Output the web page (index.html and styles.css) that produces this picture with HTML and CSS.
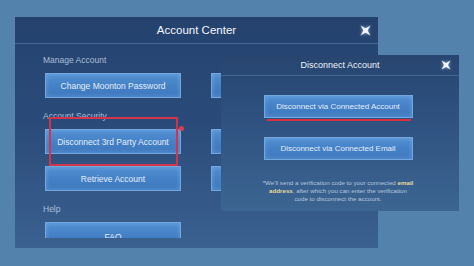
FILE: index.html
```html
<!DOCTYPE html>
<html>
<head>
<meta charset="utf-8">
<link rel="stylesheet" href="styles.css">
</head>
<body>
<div class="panel">
  <div class="panel-head">
    <span></span>
    <h1 class="title">Account Center</h1>
    <svg class="close" width="11" height="11" viewBox="0 0 10 10"><polygon points="0.5,0.5 6.2,3.8 9.5,9.5 3.8,6.2" fill="#f2f7ff"/><polygon points="9.5,0.5 6.2,6.2 0.5,9.5 3.8,3.8" fill="#f2f7ff"/></svg>
  </div>
  <div class="panel-body">
    <div class="label">Manage Account</div>
    <div class="btn-grid">
      <div class="btn">Change Moonton Password</div>
      <div class="btn"></div>
    </div>
    <div class="label gap">Account Security</div>
    <div class="btn-grid">
      <div class="btn">Disconnect 3rd Party Account</div>
      <div class="btn"></div>
      <div class="btn">Retrieve Account</div>
      <div class="btn"></div>
    </div>
    <div class="label gap">Help</div>
    <div class="btn-grid">
      <div class="btn faq">FAQ</div>
    </div>
  </div>
</div>

<div class="dialog">
  <div class="dialog-head">
    <span></span>
    <h2 class="dtitle">Disconnect Account</h2>
    <svg class="close dclose" width="10" height="10" viewBox="0 0 10 10"><polygon points="0.5,0.5 6.2,3.8 9.5,9.5 3.8,6.2" fill="#f2f7ff"/><polygon points="9.5,0.5 6.2,6.2 0.5,9.5 3.8,3.8" fill="#f2f7ff"/></svg>
  </div>
  <div class="dialog-body">
    <div class="dbtn">Disconnect via Connected Account</div>
    <div class="dbtn">Disconnect via Connected Email</div>
    <p class="note">*We'll send a verification code to your connected <b>email</b><br><b>address</b>, after which you can enter the verification<br>code to disconnect the account.</p>
  </div>
</div>

<div class="mark-box"></div>
<div class="mark-dot"></div>
<div class="mark-line"></div>
</body>
</html>
```

FILE: styles.css
```css
html, body {
  margin: 0;
  padding: 0;
}
body {
  width: 474px;
  height: 266px;
  overflow: hidden;
  position: relative;
  background: #5383ad;
  font-family: "Liberation Sans", Arial, sans-serif;
  color: #e4eefa;
}
.panel {
  margin: 17px 0 0 15px;
  width: 363px;
  height: 231px;
  background: linear-gradient(180deg, #25426e 0%, #2a4b7a 45%, #3a6190 100%);
  display: flex;
  flex-direction: column;
}
.panel-head {
  height: 26px;
  flex: none;
  border-bottom: 1px solid rgba(110, 150, 200, 0.45);
  display: grid;
  grid-template-columns: 1fr auto 1fr;
  align-items: center;
}
.title {
  margin: 0;
  font-size: 11.5px;
  font-weight: normal;
  color: #f2f6fc;
}
.close {
  justify-self: end;
  margin-right: 7px;
  filter: drop-shadow(0 0 1.5px rgba(200, 225, 255, 0.8));
}
.panel-body {
  height: 194px;
  overflow: hidden;
  padding: 11px 0 0 28px;
  box-sizing: border-box;
}
.label {
  font-size: 8.5px;
  line-height: 10px;
  color: #a9bdd6;
  margin-bottom: 8px;
}
.label.gap {
  margin-top: 13px;
}
.btn-grid {
  padding-left: 2px;
  display: grid;
  grid-template-columns: 136px 136px;
  column-gap: 30px;
  row-gap: 12px;
}
.btn {
  height: 25px;
  box-sizing: border-box;
  border: 1px solid #74a6de;
  background: linear-gradient(180deg, #5290d2 0%, #4581c6 50%, #3f79bf 100%);
  box-shadow: inset 0 0 5px rgba(160, 205, 255, 0.35);
  display: flex;
  align-items: center;
  justify-content: center;
  font-size: 8.5px;
  color: #e3eefb;
}
.faq {
  align-items: flex-end;
  padding-bottom: 4px;
}
.dialog {
  position: absolute;
  left: 221px;
  top: 55px;
  width: 238px;
  height: 156px;
  background: linear-gradient(180deg, #27456f 0%, #2e5180 40%, #3c6592 100%);
  display: flex;
  flex-direction: column;
}
.dialog-head {
  height: 20px;
  flex: none;
  border-bottom: 1px solid rgba(110, 150, 200, 0.35);
  display: grid;
  grid-template-columns: 1fr auto 1fr;
  align-items: center;
}
.dtitle {
  margin: 0;
  font-size: 9px;
  font-weight: normal;
  color: #eef3fa;
}
.dclose {
  margin-right: 8px;
}
.dialog-body {
  display: flex;
  flex-direction: column;
  align-items: center;
  padding: 19px 0 0 0;
  margin-left: -4px;
}
.dbtn {
  width: 149px;
  height: 23px;
  box-sizing: border-box;
  margin-bottom: 19px;
  border: 1px solid #74a6de;
  background: linear-gradient(180deg, #5290d2 0%, #4581c6 50%, #3f79bf 100%);
  box-shadow: inset 0 0 5px rgba(160, 205, 255, 0.35);
  display: flex;
  align-items: center;
  justify-content: center;
  font-size: 8px;
  color: #e3eefb;
}
.note {
  margin: 0;
  width: 170px;
  text-align: center;
  font-size: 6.2px;
  line-height: 8px;
  color: #b5c7de;
}
.note b {
  color: #e8dca0;
}
.mark-box {
  position: absolute;
  left: 49px;
  top: 117px;
  width: 129px;
  height: 49px;
  box-sizing: border-box;
  border: 2px solid #d4344a;
}
.mark-dot {
  position: absolute;
  left: 179px;
  top: 126px;
  width: 5px;
  height: 5px;
  border-radius: 50%;
  background: #e03a4e;
}
.mark-line {
  position: absolute;
  left: 267px;
  top: 119px;
  width: 144px;
  height: 2px;
  background: #d8303f;
}
```
